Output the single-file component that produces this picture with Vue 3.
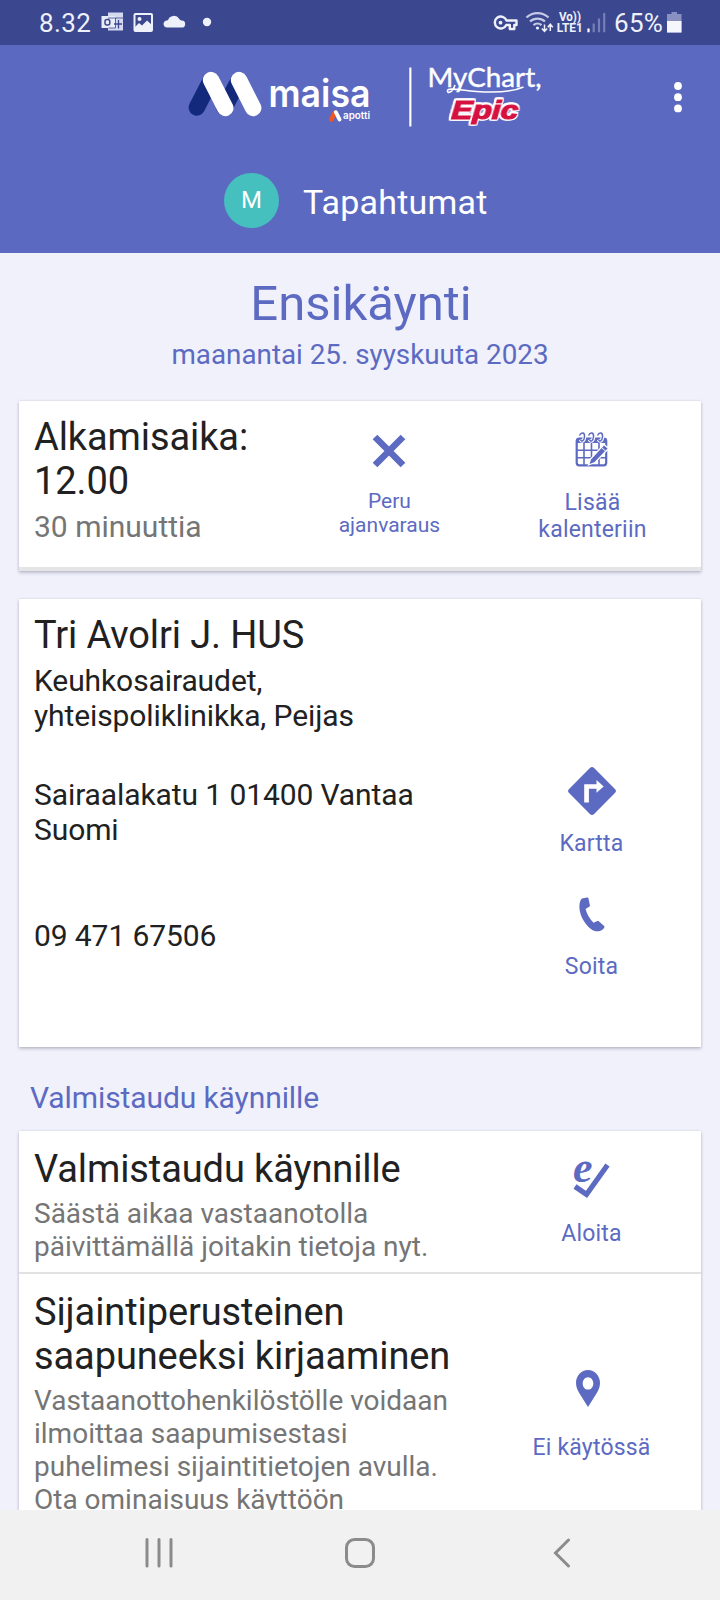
<script setup>
const checkinLines = [
  'Vastaanottohenkilöstölle voidaan',
  'ilmoittaa saapumisestasi',
  'puhelimesi sijaintitietojen avulla.',
  'Ota ominaisuus käyttöön',
]
</script>

<template>
  <div class="screen">
    <div class="status">
      <span class="clock">8.32</span>
      <svg class="notif" width="120" height="45" viewBox="97 0 120 45">
        <g fill="#d5d9f0">
          <path d="M108 12.500h15v5.500h-15z" />
          <path d="M115 18h8v12.500h-15v-3h7z" />
          <path d="M101.500 16h13.500v12h-13.500z" fill="#e8ebf8" />
        </g>
        <path d="M108 18h15M115.500 18v10h-7" fill="none" stroke="#3b478f" stroke-width=".8" />
        <path d="M118.500 20v8.500M114 24h8" stroke="#3b478f" stroke-width="1.300" />
        <rect x="105" y="19.500" width="4.800" height="5.500" rx="2" fill="none" stroke="#3b478f" stroke-width="1.500" />
        <rect x="134.500" y="14" width="17.500" height="17" rx="1" fill="none" stroke="#eef0fa" stroke-width="2" />
        <path d="M135 27l4-4 3 2.500 5-5 5 4.500v6h-17z" fill="#eef0fa" />
        <circle cx="139.500" cy="19" r="2" fill="#eef0fa" />
        <path d="M167 27.500h14.500a3.500 3.500 0 0 0 .3-7c-1.500-.2-1.800-.6-2.600-1.700a6.200 6.200 0 0 0-11.200 1.400c-2.500 0-4.500 1.400-4.500 3.900 0 2 1.500 3.400 3.500 3.400z" fill="#eef0fa" />
        <circle cx="207" cy="22" r="4.200" fill="#eef0fa" />
      </svg>
      <svg class="radio" width="120" height="45" viewBox="490 0 120 45">
        <g fill="none" stroke="#eef0fa" stroke-width="2.400">
          <path d="M506.500 20.500h10v4.500h-2.200v4h-4.500v-4h-3.500a6 6 0 1 1 .2-4.500z" stroke-linejoin="round" />
        </g>
        <circle cx="500.500" cy="22.700" r="1.900" fill="#eef0fa" />
        <g fill="none" stroke="#c3c9e6" stroke-width="2.300">
          <path d="M526.500 17.500a16 16 0 0 1 22 0" />
          <path d="M530 21.500a11 11 0 0 1 15 0" />
          <path d="M533.500 25.200a6 6 0 0 1 8 0" />
        </g>
        <circle cx="537.500" cy="28" r="1.600" fill="#eef0fa" />
        <path d="M544.500 24.500v7M541.800 28.500l2.700 3 2.700-3M550.300 31v-6.500M547.800 27.200l2.500-3 2.500 3" fill="none" stroke="#eef0fa" stroke-width="1.500" />
        <text class="net" x="559" y="20.500" textLength="22" lengthAdjust="spacingAndGlyphs">Vo))</text>
        <text class="net" x="556.800" y="32" textLength="26" lengthAdjust="spacingAndGlyphs">LTE1</text>
        <path d="M588.500 28.500v3.800" stroke="#fff" stroke-width="2.200" />
        <path d="M593.700 23.500v8.800M599 18.500v13.800M604.200 13v19.300" stroke="#7680b8" stroke-width="2.200" />
      </svg>
      <span class="percent">65%</span>
      <svg class="battery" width="15" height="21" viewBox="0 0 15 21">
        <path d="M4.500 0h5.500v2h4.500v18.500h-14.500v-18.500h4.500z" fill="#8990c2" />
        <path d="M0 9h14.500v11.500h-14.500z" fill="#f6f7fc" />
      </svg>
    </div>

    <header class="header">
      <div class="brand-row">
        <svg class="brand" width="370" height="80" viewBox="0 0 370 80">
          <g stroke-linecap="round" stroke-width="16.400">
            <path d="M31 25L16.800 52.500M59 25L44.500 52.500" stroke="#12297c" />
            <path d="M31 25L45.300 53M59 25L73.200 53" stroke="#fff" />
          </g>
          <text class="maisa" x="88.500" y="51.500" textLength="102" lengthAdjust="spacingAndGlyphs">maisa</text>
          <g stroke-linecap="round" stroke-width="3.800">
            <path d="M154.800 57.500L151.300 64.500" stroke="#f2551f" stroke-width="4.500" />
            <path d="M155.800 57.200L159.600 64.500" stroke="#fff" />
          </g>
          <text class="apotti" x="163" y="64" textLength="27" lengthAdjust="spacingAndGlyphs">apotti</text>
          <rect x="229.300" y="12.500" width="2.100" height="59" fill="#fff" />
          <text class="mychart" x="247.500" y="32.300" textLength="114" lengthAdjust="spacingAndGlyphs">MyChart,</text>
          <path d="M275 30c-2.500 8-8 9-7.500 5.500 .5-3.500 14 0 29 1 21 1.500 38-.5 47-4.500" fill="none" stroke="#fff" stroke-width="1.600" />
          <g transform="translate(271 64) skewX(-3)">
            <text class="epic" x="0" y="0" textLength="67" lengthAdjust="spacingAndGlyphs">Epic</text>
          </g>
        </svg>
        <svg class="more" width="10" height="32" viewBox="0 0 10 32">
          <circle cx="5" cy="5" r="3.900" fill="#fff" />
          <circle cx="5" cy="16.200" r="3.900" fill="#fff" />
          <circle cx="5" cy="27.400" r="3.900" fill="#fff" />
        </svg>
      </div>
      <div class="page-row">
        <span class="avatar">M</span>
        <span class="page-name">Tapahtumat</span>
      </div>
    </header>

    <main class="content">
      <h1 class="visit">Ensikäynti</h1>
      <p class="date">maanantai 25. syyskuuta 2023</p>

      <section class="card time-card">
        <div class="time-text">
          <div class="title">Alkamisaika:<br />12.00</div>
          <div class="duration">30 minuuttia</div>
        </div>
        <div class="action cancel">
          <svg width="34" height="34" viewBox="0 0 34 34">
            <path d="M3 3L31 31M31 3L3 31" stroke="#5c6ac2" stroke-width="6.600" />
          </svg>
          <span>Peru<br />ajanvaraus</span>
        </div>
        <div class="action calendar">
          <svg width="34" height="36" viewBox="0 0 34 36">
            <g fill="none" stroke="#5c6ac2">
              <rect x="1.700" y="7.500" width="29.500" height="26.800" rx="2.500" stroke-width="2.200" />
              <path d="M9 11v23M16.500 11v23M24 11v23M2 19.300h29M2 26.800h29" stroke-width="1.600" />
            </g>
            <path d="M1.500 7.500h30v4.500h-30z" fill="#5c6ac2" />
            <g fill="none">
              <path d="M4.500 4.500c2-4 5.500-3 5 1.500s-3 5-4 2.500M13.500 4.500c2-4 5.500-3 5 1.500s-3 5-4 2.500M22.500 4.500c2-4 5.500-3 5 1.500s-3 5-4 2.500" stroke="#fff" stroke-width="3.500" />
              <path d="M4.500 4.500c2-4 5.500-3 5 1.500s-3 5-4 2.500M13.500 4.500c2-4 5.500-3 5 1.500s-3 5-4 2.500M22.500 4.500c2-4 5.500-3 5 1.500s-3 5-4 2.500" stroke="#5c6ac2" stroke-width="1.500" />
            </g>
            <path d="M13.500 34l2-6 13.500-14.500 4.500 4-13.500 14z" fill="#5c6ac2" stroke="#fff" stroke-width="1.300" />
            <path d="M26.300 16.300l4.500 4" stroke="#fff" stroke-width="1" />
          </svg>
          <span>Lisää<br />kalenteriin</span>
        </div>
      </section>

      <section class="card place-card">
        <div class="place-text">
          <div class="title">Tri Avolri J. HUS</div>
          <p class="body clinic">Keuhkosairaudet,<br />yhteispoliklinikka, Peijas</p>
          <p class="body address">Sairaalakatu 1 01400 Vantaa<br />Suomi</p>
          <p class="body phone">09 471 67506</p>
        </div>
        <div class="place-actions">
          <div class="action map">
            <svg width="48" height="48" viewBox="0 0 48 48">
              <rect x="6.300" y="6.300" width="35.400" height="35.400" rx="3" transform="rotate(45 24 24)" fill="#5c6ac2" />
              <path d="M16.200 35.500V17.300h12.300V13l7.200 6.500-7.200 6.300v-4.100h-7.600v13.800z" fill="#fff" />
            </svg>
            <span>Kartta</span>
          </div>
          <div class="action call">
            <svg width="26" height="35" viewBox="0 0 26 35">
              <path d="M3 1.500L8 .5q1.300-.2 1.500 1l1.400 6.800q.2 1-.7 1.500L6.600 12c1.200 5 4 10 8 13.800l3.700-1.700q.8-.4 1.500.2l5.300 4.800q.9.800 0 1.800c-1.800 2.500-4.800 3.700-8.600 3.300C9.500 32.500.2 20.500.4 9.200.5 5.800 1.200 3 3 1.500z" fill="#5c6ac2" />
            </svg>
            <span>Soita</span>
          </div>
        </div>
      </section>

      <h2 class="group">Valmistaudu käynnille</h2>

      <section class="card tasks">
        <div class="task prepare">
          <div class="task-text">
            <div class="title">Valmistaudu käynnille</div>
            <p class="note">Säästä aikaa vastaanotolla<br />päivittämällä joitakin tietoja nyt.</p>
          </div>
          <div class="action">
            <svg class="e-check" width="38" height="38" viewBox="0 0 38 38">
              <path d="M2 25.500L13.500 33.500L34.500 4" fill="none" stroke="#5c6ac2" stroke-width="5.200" />
              <text class="e-mark" x="0" y="21">e</text>
            </svg>
            <span>Aloita</span>
          </div>
        </div>
        <div class="task arrival">
          <div class="task-text">
            <div class="title">Sijaintiperusteinen<br />saapuneeksi kirjaaminen</div>
            <p class="note"><template v-for="line in checkinLines" :key="line">{{ line }}<br /></template></p>
          </div>
          <div class="action">
            <svg class="pin" width="24" height="37" viewBox="0 0 24 37">
              <path fill-rule="evenodd" d="M12 0c6.700 0 12 5.700 12 13 0 4-1.500 7-3.500 10.500L12 37 3.500 23.500C1.500 20 0 17 0 13 0 5.700 5.300 0 12 0zm0 7.200c-3 0-5.300 2.800-5.300 6.200s2.300 6.200 5.300 6.200 5.300-2.800 5.300-6.200S15 7.200 12 7.200z" fill="#5c6ac2" />
            </svg>
            <span>Ei käytössä</span>
          </div>
        </div>
      </section>
    </main>

    <nav class="nav">
      <svg width="28" height="30" viewBox="0 0 28 30">
        <path d="M2 1.500v26.500M14 1.500v26.500M26 1.500v26.500" stroke="#8b8b8b" stroke-width="3" stroke-linecap="round" />
      </svg>
      <svg class="home" width="32" height="32" viewBox="0 0 32 32">
        <rect x="2.500" y="2.500" width="27" height="27" rx="8" fill="none" stroke="#8b8b8b" stroke-width="3" />
      </svg>
      <svg width="18" height="30" viewBox="0 0 18 30">
        <path d="M15.500 2L2.500 15l13 13" fill="none" stroke="#8b8b8b" stroke-width="3" stroke-linecap="round" />
      </svg>
    </nav>
  </div>
</template>

<style>
body {
  background: #f0f1fb;
}
</style>

<style scoped>
.screen {
  width: 720px;
  height: 1600px;
  overflow: hidden;
  display: flex;
  flex-direction: column;
  font-family: Roboto, "Noto Sans", sans-serif;
  background: #f0f1fb;
  white-space: nowrap;
}
svg {
  display: block;
  flex: none;
}
p, h1, h2 {
  margin: 0;
  font-weight: 400;
}
.status {
  height: 45px;
  flex: none;
  display: flex;
  align-items: center;
  background: #3b478f;
  color: #eef0fa;
  font-size: 26px;
  padding-left: 39px;
  box-sizing: border-box;
}
.clock {
  width: 58px;
  letter-spacing: 0.4px;
}
.radio {
  margin-left: 273px;
}
.percent {
  width: 52px;
  margin-left: 4px;
  letter-spacing: 0.3px;
}
.battery {
  margin-left: 1px;
}
.net {
  font: 700 12px Roboto, sans-serif;
  fill: #eef0fa;
}
.header {
  height: 208px;
  flex: none;
  background: #5c69c1;
  color: #fff;
}
.brand-row {
  display: flex;
  align-items: center;
  height: 80px;
  padding: 10px 0 0 180px;
}
.more {
  margin-left: 123px;
  margin-top: 4px;
}
.maisa {
  font: 600 38px Inter, sans-serif;
  fill: #fff;
}
.apotti {
  font: 600 10px Inter, sans-serif;
  fill: #fff;
}
.mychart {
  font: 400 26.5px Lato, sans-serif;
  fill: #fff;
  stroke: #fff;
  stroke-width: 0.4px;
}
.epic {
  font: italic 700 25px "Liberation Sans", sans-serif;
  fill: #d6113f;
  stroke: #d6113f;
  stroke-width: 1.2px;
  filter: drop-shadow(1.6px 0 0 #fff) drop-shadow(-1.6px 0 0 #fff) drop-shadow(0 1.6px 0 #fff) drop-shadow(0 -1.6px 0 #fff);
}
.page-row {
  display: flex;
  align-items: center;
  height: 56px;
  padding: 37px 0 0 224px;
}
.avatar {
  width: 55px;
  height: 55px;
  border-radius: 50%;
  background: #45c0be;
  font-size: 24px;
  line-height: 55px;
  text-align: center;
}
.page-name {
  margin-left: 24px;
  font-size: 34px;
  line-height: 40px;
  padding-top: 4px;
  letter-spacing: 0.2px;
}
.content {
  height: 1257px;
  flex: none;
  overflow: hidden;
}
.visit {
  margin-top: 22px;
  padding-left: 2px;
  font-size: 49px;
  line-height: 58px;
  text-align: center;
  color: #5c6ac2;
}
.date {
  font-size: 27.8px;
  line-height: 34px;
  margin-top: 5px;
  text-align: center;
  color: #5c6ac2;
}
.card {
  width: 682px;
  margin-left: 19px;
  background: #fff;
  box-shadow: 0 2px 3px rgba(60, 60, 80, 0.26), 0 0 2px rgba(60, 60, 80, 0.16);
  color: #212121;
  box-sizing: border-box;
}
.title {
  font-size: 38px;
  line-height: 44px;
  letter-spacing: -0.1px;
}
.time-card {
  height: 170px;
  margin-top: 29px;
  border-bottom: 4px solid #e5e5e7;
  display: flex;
}
.time-text {
  width: 260px;
  padding: 14px 0 0 15px;
}
.duration {
  margin-top: 6px;
  font-size: 30px;
  line-height: 36px;
  color: #757575;
}
.action {
  display: flex;
  flex-direction: column;
  align-items: center;
  color: #5c6ac2;
  font-size: 23px;
  text-align: center;
  width: 205px;
}
.cancel {
  padding-top: 33px;
  margin-left: 2px;
  width: 190px;
}
.cancel span {
  margin-top: 21px;
  font-size: 21px;
  line-height: 24px;
}
.calendar {
  padding-top: 30px;
  width: 218px;
}
.calendar span {
  margin-top: 22px;
  line-height: 27px;
  letter-spacing: 0.2px;
}
.place-card {
  height: 448px;
  margin-top: 28px;
  display: flex;
}
.place-text {
  width: 470px;
  padding: 14px 0 0 15px;
  box-sizing: border-box;
}
.body {
  font-size: 30px;
  line-height: 35px;
  letter-spacing: -0.1px;
}
.clinic {
  margin-top: 6px;
}
.address {
  margin-top: 44px;
}
.phone {
  margin-top: 71px;
}
.place-actions {
  padding-top: 168px;
}
.map span {
  margin-top: 15px;
  line-height: 27px;
  letter-spacing: 0.2px;
}
.call {
  margin-top: 40px;
}
.call span {
  margin-top: 21px;
  line-height: 27px;
  letter-spacing: 0.2px;
}
.group {
  margin: 33px 0 0 30px;
  font-size: 30px;
  line-height: 36px;
  letter-spacing: -0.1px;
  color: #5c6ac2;
}
.tasks {
  margin-top: 15px;
}
.task {
  display: flex;
}
.task-text {
  width: 470px;
  padding: 16px 0 0 15px;
  box-sizing: border-box;
}
.note {
  margin-top: 6px;
  font-size: 28px;
  line-height: 33px;
  color: #757575;
}
.prepare {
  height: 143px;
  border-bottom: 2px solid #e2e2e3;
  box-sizing: border-box;
}
.prepare .action {
  padding-top: 30px;
}
.prepare .action span {
  margin-top: 21px;
  line-height: 27px;
  letter-spacing: 0.2px;
}
.arrival .action {
  padding-top: 96px;
}
.pin {
  margin-right: 7px;
}
.arrival .action span {
  margin-top: 27px;
  line-height: 27px;
  letter-spacing: 0.2px;
}
.e-check {
  overflow: visible;
}
.e-mark {
  font: italic 700 44px "Liberation Serif", serif;
  fill: #5c6ac2;
}
.nav {
  flex: 1;
  background: #f1f1f1;
  display: flex;
  align-items: center;
  justify-content: space-between;
  padding: 0 149px 4px 145px;
}
.home {
  margin-right: 6px;
}
</style>
